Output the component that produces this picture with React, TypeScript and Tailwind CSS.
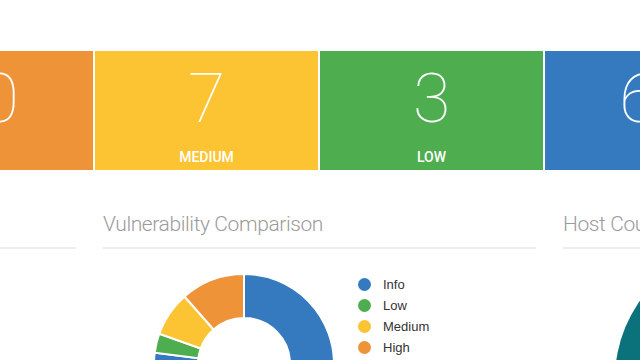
import React from 'react';

const tiles = [
  { value: 0, label: 'CRITICAL', bg: 'bg-[#d43f3a]' },
  { value: 10, label: 'HIGH', bg: 'bg-[#ee9337]' },
  { value: 7, label: 'MEDIUM', bg: 'bg-[#fcc332]' },
  { value: 3, label: 'LOW', bg: 'bg-[#4eae4f]' },
  { value: 67, label: 'INFO', bg: 'bg-[#357abf]' },
];

const slices = [
  { label: 'Info', value: 67, color: '#357abf' },
  { label: 'Low', value: 3, color: '#4eae4f' },
  { label: 'Medium', value: 7, color: '#fcc332' },
  { label: 'High', value: 10, color: '#ee9337' },
  { label: 'Critical', value: 0, color: '#d43f3a' },
];

function arcPath(cx: number, cy: number, R: number, r: number, a0: number, a1: number) {
  const rad = (d: number) => (d * Math.PI) / 180;
  const pt = (rr: number, a: number) => [cx + rr * Math.sin(rad(a)), cy - rr * Math.cos(rad(a))];
  const large = a1 - a0 > 180 ? 1 : 0;
  const [x0, y0] = pt(R, a0);
  const [x1, y1] = pt(R, a1);
  const [x2, y2] = pt(r, a1);
  const [x3, y3] = pt(r, a0);
  return `M${x0} ${y0} A${R} ${R} 0 ${large} 1 ${x1} ${y1} L${x2} ${y2} A${r} ${r} 0 ${large} 0 ${x3} ${y3} Z`;
}

function Donut() {
  const total = slices.reduce((s, d) => s + d.value, 0);
  let start = 0;
  return (
    <svg width="180" height="180" viewBox="0 0 180 180" className="shrink-0">
      {slices.map((s) => {
        if (!s.value) return null;
        const end = start + (s.value / total) * 360;
        const d = arcPath(90, 90, 90, 46, start, end);
        start = end;
        return <path key={s.label} d={d} fill={s.color} stroke="#fff" strokeWidth={2} />;
      })}
    </svg>
  );
}

function Heading({ title }: { title: string }) {
  return (
    <div className="border-b-2 border-[#ececec] pb-[9px]">
      <h2 className="text-[21px] leading-[28px] font-light tracking-[-0.4px] text-[#9b9b9b] whitespace-nowrap" style={{ fontFamily: 'Roboto, "Liberation Sans", sans-serif' }}>
        {title}
      </h2>
    </div>
  );
}

export default function App() {
  return (
    <div className="w-[640px] h-[360px] overflow-hidden bg-white">
      <div className="flex gap-[2px] -ml-[355px] pt-[51px]">
        {tiles.map((t) => (
          <div key={t.label} className={`${t.bg} w-[223px] h-[119px] shrink-0 flex flex-col items-center text-white`}>
            <div className="pt-[14px] text-[68px] leading-none font-thin" style={{ fontFamily: 'Roboto, "Liberation Sans", sans-serif' }}>
              {t.value}
            </div>
            <div className="mt-[17px] text-[14px] leading-[14px] font-medium" style={{ fontFamily: 'Roboto, "Liberation Sans", sans-serif' }}>
              {t.label}
            </div>
          </div>
        ))}
      </div>

      <div className="flex gap-[27px] -ml-[357px] mt-[40px]">
        <div className="w-[433px] shrink-0">
          <Heading title="Severity Summary" />
        </div>

        <div className="w-[433px] shrink-0">
          <Heading title="Vulnerability Comparison" />
          <div className="flex pt-[25px] pl-[51px]">
            <Donut />
            <ul className="ml-[24px]" style={{ fontFamily: '"Liberation Sans", Arial, sans-serif' }}>
              {slices.map((s) => (
                <li key={s.label} className="flex items-center h-[21px] gap-[12px] text-[13px] text-[#333]">
                  <span className="w-[13px] h-[13px] rounded-full" style={{ backgroundColor: s.color }} />
                  {s.label}
                </li>
              ))}
            </ul>
          </div>
        </div>

        <div className="w-[433px] shrink-0">
          <Heading title="Host Count" />
          <div className="pt-[25px]">
            <svg width="433" height="200" viewBox="0 0 433 200" className="overflow-visible">
              <circle cx="187" cy="105" r="135" fill="#0b727b" />
            </svg>
          </div>
        </div>
      </div>
    </div>
  );
}
